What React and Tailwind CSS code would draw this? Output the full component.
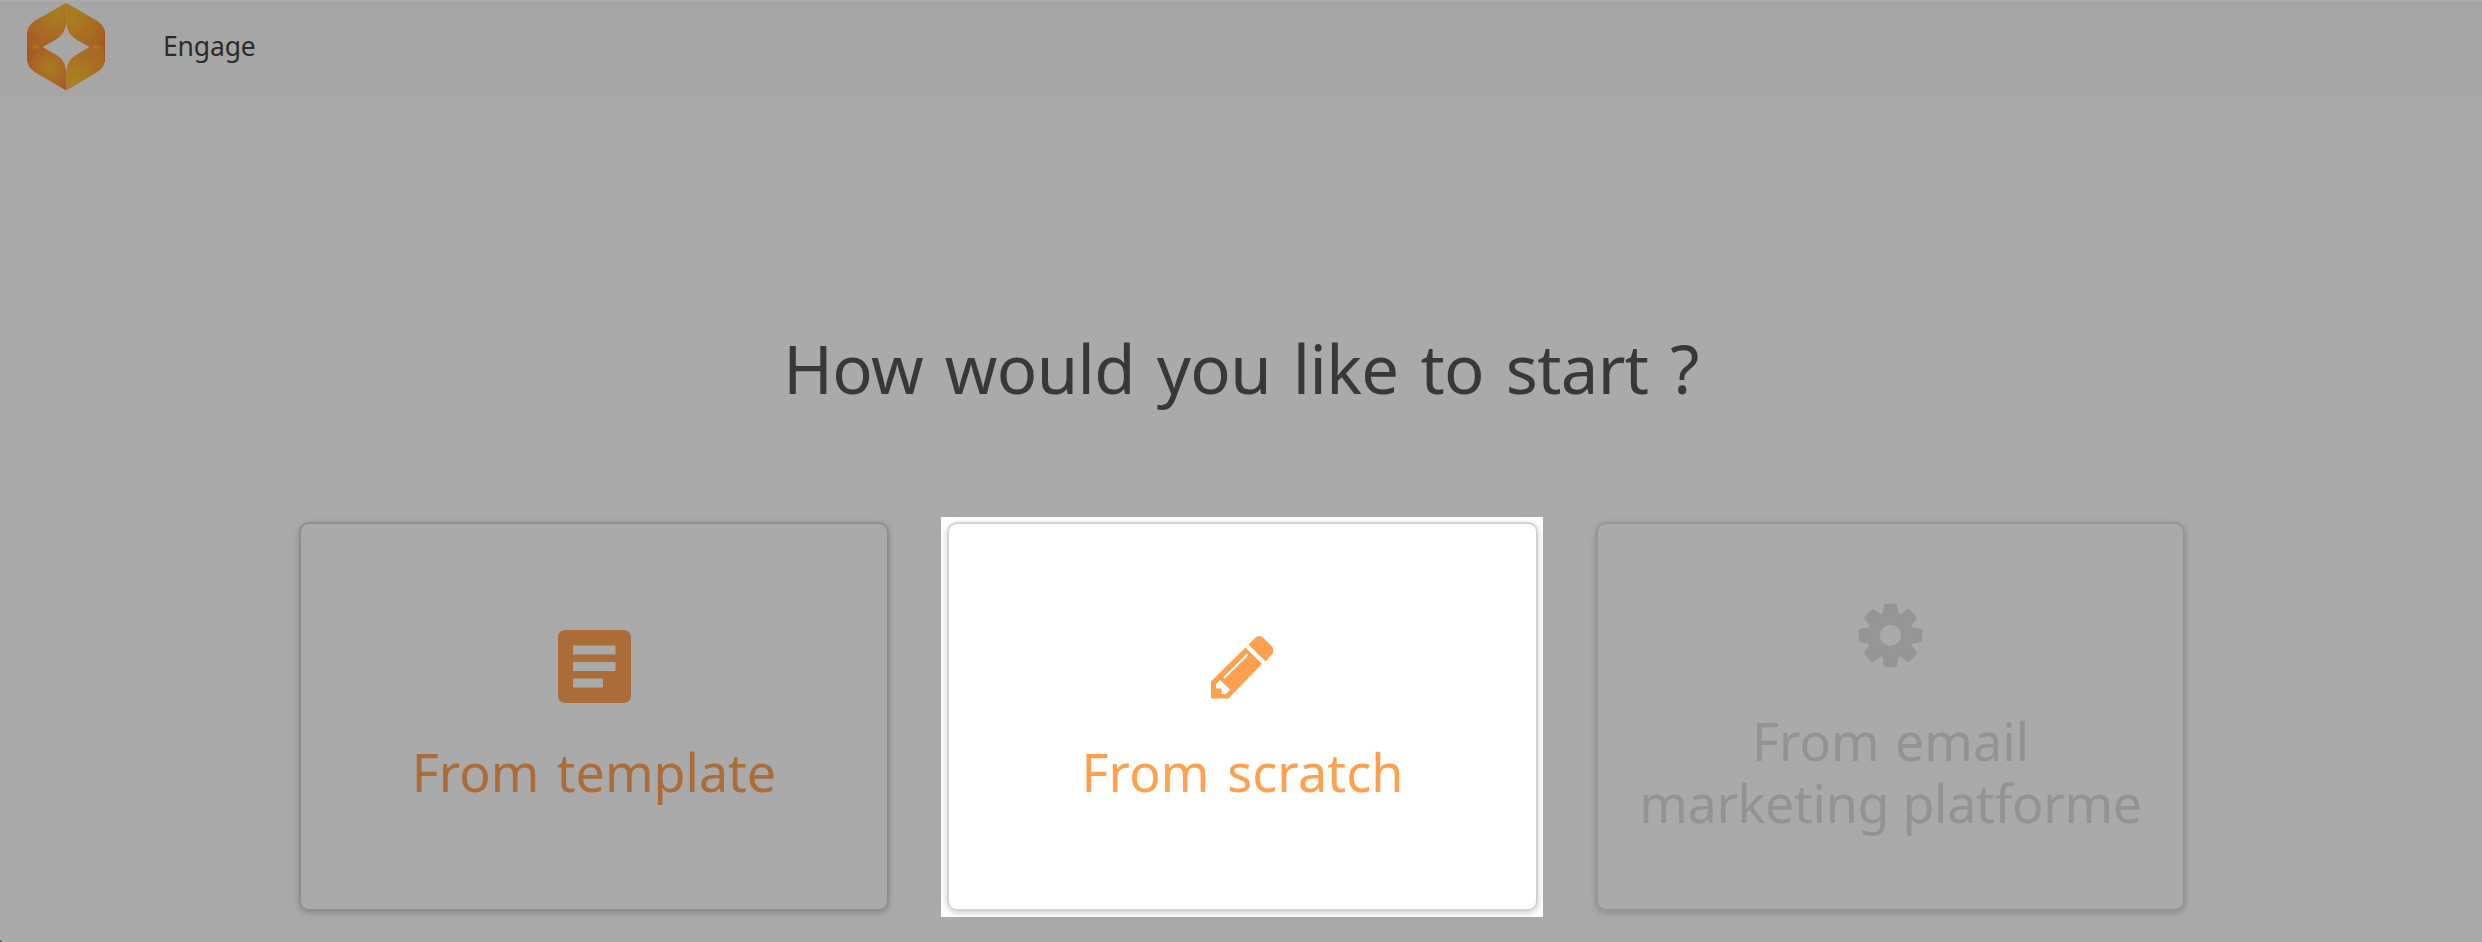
import React from 'react';

function Logo() {
  return (
    <svg className="ml-[26px] h-[90px] w-[80px]" viewBox="26 2 80 90">
      <defs>
        <radialGradient id="tl" gradientUnits="userSpaceOnUse" cx="59" cy="13" r="40">
          <stop offset="0" stopColor="#a87e20" />
          <stop offset="1" stopColor="#a85e22" />
        </radialGradient>
        <radialGradient id="tr" gradientUnits="userSpaceOnUse" cx="72" cy="17" r="40">
          <stop offset="0" stopColor="#aa7f20" />
          <stop offset="1" stopColor="#a85e22" />
        </radialGradient>
        <radialGradient id="bl" gradientUnits="userSpaceOnUse" cx="50" cy="67" r="27">
          <stop offset="0" stopColor="#a97d20" />
          <stop offset="1" stopColor="#a85522" />
        </radialGradient>
        <radialGradient id="br" gradientUnits="userSpaceOnUse" cx="74" cy="80" r="46">
          <stop offset="0" stopColor="#aa8220" />
          <stop offset="1" stopColor="#a85f22" />
        </radialGradient>
        <radialGradient id="spot">
          <stop offset="0" stopColor="#ab7f20" />
          <stop offset="1" stopColor="#a85f22" stopOpacity="0" />
        </radialGradient>
      </defs>
      <path fill="url(#tl)" d="M66.2 3 L34.5 21 Q27.3 26 27.3 33 V47 H42.5 L56 39.5 Q65.5 34 66.2 23 Z" />
      <path fill="url(#tr)" d="M66.2 3 L97.500 21 Q104.800 26 104.800 33 V47 H89.500 L76.400 39.500 Q67 34 66.200 23 Z" />
      <path fill="url(#bl)" d="M66.200 90.500 L34.500 72 Q27.300 67 27.300 60 V47 H42.500 L56 54.800 Q65.500 60 66.200 72 Z" />
      <path fill="url(#br)" d="M66.200 90.500 L97.500 72 Q104.800 67 104.800 60 V47 H89.500 L76.400 54.800 Q67 60 66.200 72 Z" />
      <path fill="url(#spot)" d="M29 41 L42.500 47 L29 53 Z" />
      <path fill="url(#spot)" d="M103.500 41 L89.500 47 L103.500 53 Z" />
      <path stroke="#a84f20" strokeWidth="1" fill="none" d="M27.800 31 V62 M104.300 31 V62" />
    </svg>
  );
}

function TemplateIcon() {
  return (
    <svg className="h-[73px] w-[73px]" viewBox="0 0 73 73">
      <path
        fill="#ab6c38"
        fillRule="evenodd"
        d="M8 0H65Q73 0 73 8V65Q73 73 65 73H8Q0 73 0 65V8Q0 0 8 0ZM15 15.500V24.500H57.500V15.500ZM15 32V41H57.500V32ZM15 48.500V57.500H45V48.500Z"
      />
    </svg>
  );
}

function PencilIcon() {
  return (
    <svg className="h-[73px] w-[73px]" viewBox="0 0 73 73">
      <g fill="#ffa04e">
        <path
          fillRule="evenodd"
          d="M39.500 17.500 L56 34 L22.500 68.500 H5 V51.500 ZM14 50 L10 54 V58.500 H15.500 V64 H20 L24 59.500Z"
        />
        <path d="M42.500 14.500 L49 8 Q53 4 57.500 8 L65.500 16 Q69.500 20.500 65.500 25 L59.500 31.500 Z" />
      </g>
      <path stroke="#fff" strokeWidth="2" strokeLinecap="round" d="M18.500 47.500 L41 25" />
    </svg>
  );
}

function GearIcon() {
  return (
    <svg className="h-[73px] w-[73px]" viewBox="-36.500 -36.500 73 73">
      <g fill="#959595">
        {[0, 45, 90, 135, 180, 225, 270, 315].map((a) => (
          <path
            key={a}
            transform={`rotate(${a})`}
            d="M-9.500 -20 Q-8.200 -21.500 -7.800 -23 L-6.700 -30 Q-6.300 -31.800 -4.500 -31.800 H4.500 Q6.300 -31.800 6.700 -30 L7.800 -23 Q8.200 -21.500 9.500 -20 L6 -14 H-6 Z"
          />
        ))}
        <path fillRule="evenodd" d="M0 -22.500A22.500 22.500 0 1 1 0 22.500A22.500 22.500 0 1 1 0 -22.500ZM0 -10.600A10.600 10.600 0 1 0 0 10.600A10.600 10.600 0 1 0 0 -10.600Z" />
      </g>
    </svg>
  );
}

const cardBase =
  'flex h-[389px] flex-col items-center justify-center gap-[38px] rounded-[10px] border-2 text-center text-[52px] leading-[62px] whitespace-nowrap shadow-[0_2px_6px_rgba(0,0,0,0.2)]';

export default function App() {
  return (
    <div className="relative flex h-[942px] w-[2482px] flex-col overflow-hidden bg-[#aaaaaa] font-['Noto_Sans','Open_Sans',sans-serif]">
      <header className="flex h-[97px] shrink-0 items-start border-t border-[#acacac] bg-[#a6a6a6] pt-px">
        <Logo />
        <span className="ml-[57px] mt-[24px] text-[26.500px] leading-[40px] tracking-[-0.15px] text-[#2b2b2b]">Engage</span>
      </header>
      <h1 className="mt-[231px] text-center text-[67px] leading-[80px] tracking-[-0.6px] text-[#383838] [word-spacing:5px]">
        How would you like to start ?
      </h1>
      <main className="mt-[109px] flex items-start pl-[299px]">
        <section className="mt-[5px]">
          <div className={`${cardBase} w-[590px] border-[#8e8e8e] text-[#ab6c38]`}>
            <TemplateIcon />
            <span className="[word-spacing:4px]">From template</span>
          </div>
        </section>
        <section className="ml-[52px] h-[400px] w-[602px] bg-white pl-[6px] pt-[5px]">
          <div className={`${cardBase} w-[591px] border-[#d3d3d3] text-[#ffa04e]`}>
            <PencilIcon />
            <span className="tracking-[0.15px] [word-spacing:4px]">From scratch</span>
          </div>
        </section>
        <section className="ml-[53px] mt-[5px]">
          <div className={`${cardBase} w-[589px] border-[#959595] text-[#939393]`}>
            <GearIcon />
            <span>
              <span className="block [word-spacing:2px]">From email</span>
              <span className="block tracking-[-0.3px]">marketing platforme</span>
            </span>
          </div>
        </section>
      </main>
      <div className="absolute bottom-0 left-0 h-[2px] w-[2px] rounded-tr-[2px] bg-[#555555]" />
    </div>
  );
}
